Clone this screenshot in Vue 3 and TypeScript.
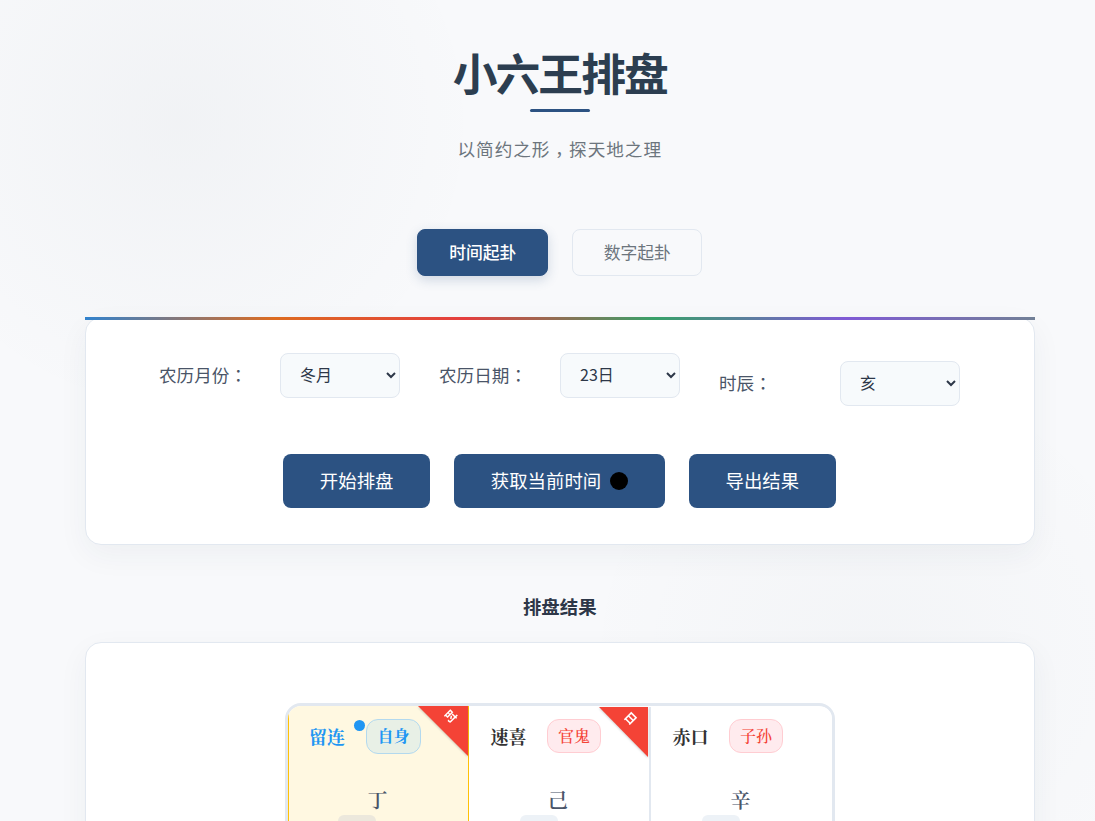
<script setup lang="ts">
interface Palace { name: string; rel: string; stem: string; active?: boolean; corner?: string }
const palaces: Palace[] = [
  { name: '留连', rel: '自身', stem: '丁', active: true, corner: '时' },
  { name: '速喜', rel: '官鬼', stem: '己', corner: '日' },
  { name: '赤口', rel: '子孙', stem: '辛' },
]
const fields = [
  { label: '农历月份', value: '冬月' },
  { label: '农历日期', value: '23日' },
  { label: '时辰', value: '亥' },
]
</script>

<template>
  <div class="page">
    <header class="head">
      <h1 class="title">小六王排盘</h1>
      <div class="rule"></div>
      <p class="sub">以简约之形<span class="punct comma">，</span>探天地之理</p>
    </header>

    <div class="tabs">
      <button class="tab on">时间起卦</button>
      <button class="tab">数字起卦</button>
    </div>

    <section class="card form">
      <div class="fields">
        <div v-for="f in fields" :key="f.label" class="field">
          <label class="lab">{{ f.label }}<span class="punct">：</span></label>
          <select class="sel"><option>{{ f.value }}</option></select>
        </div>
      </div>
      <div class="actions">
        <button class="act">开始排盘</button>
        <button class="act">获取当前时间<span class="dot"></span></button>
        <button class="act">导出结果</button>
      </div>
    </section>

    <h2 class="result">排盘结果</h2>

    <section class="card board">
      <div class="grid">
        <div v-for="p in palaces" :key="p.name" class="cell" :class="{ active: p.active }">
          <div v-if="p.corner" class="corner"><span>{{ p.corner }}</span></div>
          <div class="top">
            <span class="name">{{ p.name }}</span>
            <span v-if="p.active" class="pin"></span>
            <span class="rel">{{ p.rel }}</span>
          </div>
          <div class="stem">{{ p.stem }}</div>
          <div class="chip"></div>
        </div>
      </div>
    </section>
  </div>
</template>

<style>
html, body { margin: 0; background: #f8f9fa; }
</style>

<style scoped>
.page {
  box-sizing: border-box;
  height: 821px;
  overflow: hidden;
  padding: 0 60px 0 84.5px;
  font-family: "Noto Sans CJK SC", "Noto Sans", sans-serif;
  background:
    radial-gradient(circle at 180px 122px, rgba(44, 62, 80, 0.035) 0, rgba(44, 62, 80, 0) 300px),
    radial-gradient(circle at 876px 657px, rgba(44, 62, 80, 0.025) 0, rgba(44, 62, 80, 0) 300px),
    #f8f9fb;
}
.punct { font-family: "Noto Sans CJK TC", sans-serif; }
.comma { display: inline-block; transform: translateY(5px); }
.head { text-align: center; padding-top: 38px; }
.title { margin: 0; font-size: 44.8px; line-height: 68px; font-weight: 700; color: #2c3e50; letter-spacing: -2px; }
.rule { width: 60px; height: 3px; margin: 3px auto 0; border-radius: 2px; background: #2c5282; }
.sub { margin: 22px 0 0; font-size: 17.6px; line-height: 30px; letter-spacing: 1px; color: #6c757d; }

.tabs { display: flex; justify-content: center; gap: 24px; margin-top: 65px; }
.tab {
  box-sizing: border-box;
  width: 130px;
  height: 47px;
  padding: 0 0 2px;
  border: 1px solid #e2e8f0;
  border-radius: 8px;
  background: #f8f9fb;
  color: #6c757d;
  font: 400 16.8px "Noto Sans CJK SC", sans-serif;
}
.tab.on {
  width: 131px;
  border-color: #2c5282;
  background: #2c5282;
  color: #fff;
  font-weight: 500;
  box-shadow: 0 4px 12px rgba(44, 82, 130, 0.2);
}

.card {
  box-sizing: border-box;
  width: 950px;
  background: #fff;
  border: 1px solid #e2e8f0;
  border-radius: 16px;
  box-shadow: 0 10px 30px rgba(44, 62, 80, 0.05);
}
.form { position: relative; height: 228px; margin-top: 41px; padding-top: 35px; }
.form::before {
  content: "";
  position: absolute;
  left: -1px;
  right: -1px;
  top: -1px;
  height: 3px;
  background: linear-gradient(90deg, #3182ce, #dd6b20, #e53e3e, #38a169, #805ad5, #718096);
}
.fields { display: flex; justify-content: center; align-items: flex-start; gap: 39px; }
.field { display: flex; align-items: center; }
.field:last-child { margin-top: 8px; }
.lab { width: 121px; padding-bottom: 2px; font-size: 17.6px; color: #4a5568; }
.sel {
  box-sizing: border-box;
  width: 120px;
  height: 45px;
  padding: 0 15px 4px;
  border: 1px solid #e2e8f0;
  border-radius: 8px;
  background: #f7fafc;
  color: #2d3748;
  font: 16px "Noto Sans CJK SC", sans-serif;
}
.actions { display: flex; justify-content: center; gap: 24px; margin-top: 48px; }
.act {
  display: flex;
  align-items: center;
  justify-content: center;
  box-sizing: border-box;
  height: 54px;
  padding: 0 36.7px 2px;
  border: 0;
  border-radius: 8px;
  background: #2c5282;
  color: #fff;
  font: 400 18.4px "Noto Sans CJK SC", sans-serif;
}
.dot { width: 18px; height: 18px; margin: 2px 0 0 9px; border-radius: 50%; background: #000; }

.result { margin: 46px 0 0; text-align: center; font-size: 18.4px; line-height: 30px; font-weight: 700; color: #2d3748; }
.board { margin-top: 21px; height: 400px; padding-top: 60px; }
.grid {
  display: flex;
  box-sizing: border-box;
  width: 550px;
  margin-left: 199.5px;
  border: 3px solid #e2e8f0;
  border-radius: 16px;
  overflow: hidden;
  background: #fff;
  padding-top: 1px;
}
.cell { position: relative; box-sizing: border-box; width: 181px; height: 300px; background: #fff; }
.cell:nth-child(2) { width: 182px; border-right: 2px solid #e2e8f0; }
.cell.active { margin-top: -1px; background: #fff8e1; box-shadow: inset 1px 0 0 #ffc107, inset -1px 0 0 #ffc107; }
.corner {
  position: absolute;
  right: 1px;
  top: 0;
  width: 50px;
  height: 50px;
  filter: drop-shadow(0 1px 1px rgba(0, 0, 0, 0.2));
}
.cell:nth-child(2) .corner { width: 49px; }
.corner::before {
  content: "";
  position: absolute;
  inset: 0;
  background: #f44336;
  clip-path: polygon(0 0, 100% 0, 100% 100%);
}
.corner span {
  position: absolute;
  right: 11px;
  top: 3px;
  font-size: 12px;
  line-height: 14px;
  font-weight: 700;
  color: #fff;
  transform: rotate(45deg);
}
.cell:nth-child(2) .corner span { top: 4px; right: 11px; }
.top { position: relative; display: flex; align-items: center; height: 34px; margin-top: 12px; padding-left: 21.5px; }
.active .top { margin-top: 13px; padding-left: 21px; }
.name {
  width: 56.5px;
  font-family: "Noto Serif CJK SC", "Liberation Serif", "Noto Sans CJK SC", serif;
  font-size: 18px;
  font-weight: 700;
  color: #333;
}
.active .name { width: 57px; color: #2196f3; }
.pin { position: absolute; left: 66px; top: 1px; width: 11px; height: 11px; border-radius: 50%; background: #2196f3; }
.rel {
  box-sizing: border-box;
  width: 54px;
  height: 34px;
  border: 1px solid #ffcdd2;
  border-radius: 12px;
  background: #ffebee;
  color: #f44336;
  text-align: center;
  line-height: 31px;
  font-family: "Noto Serif CJK SC", "Liberation Serif", "Noto Sans CJK SC", serif;
  font-size: 16px;
  font-weight: 500;
}
.active .rel { width: 55px; height: 35px; border-color: #b3d9ee; background: #e8f0e6; color: #2196f3; font-weight: 700; }
.stem {
  margin-top: 32px;
  padding-right: 2px;
  text-align: center;
  font-family: "Noto Serif CJK SC", "Liberation Serif", "Noto Sans CJK SC", serif;
  font-size: 20px;
  line-height: 30px;
  font-weight: 600;
  color: #4a5568;
}
.chip { width: 38px; height: 40px; margin: 0 0 0 50.5px; border-radius: 6px; background: #edf2f7; }
.active .chip { margin-left: 50px; background: #ece8dc; }
</style>
